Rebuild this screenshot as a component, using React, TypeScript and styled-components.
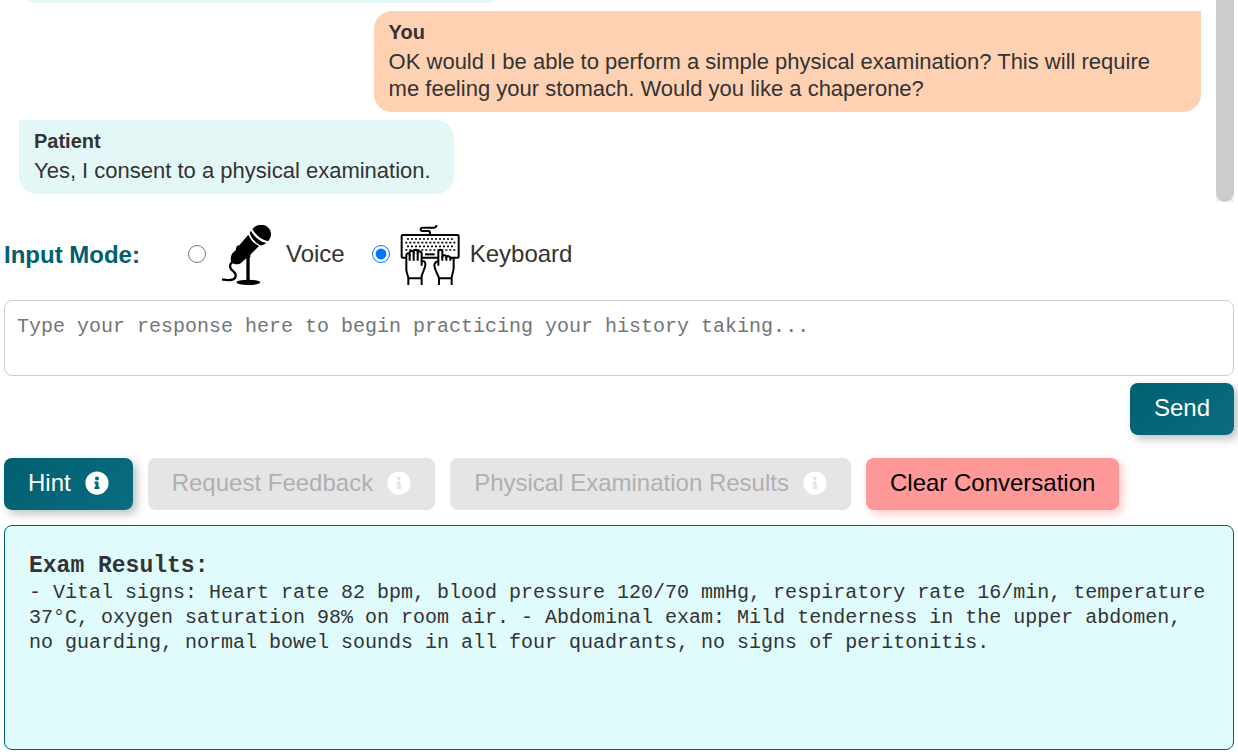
import React from "react";
import styled, { createGlobalStyle, css } from "styled-components";
import { FaInfoCircle } from "react-icons/fa";

const sans = '"Liberation Sans", Arial, sans-serif';
const mono = '"Liberation Mono", "Courier New", monospace';

const GlobalStyle = createGlobalStyle`
  *, *::before, *::after { box-sizing: border-box; }
  body {
    margin: 0;
    background: #fff;
    color: #333;
    font-family: ${sans};
    overflow-x: hidden;
  }
`;

const Page = styled.main`
  display: flex;
  flex-direction: column;
  padding: 0 4px 5px;
`;

const ChatPanel = styled.section`
  display: flex;
  height: 202px;
  overflow: hidden;
`;

const ChatLog = styled.div`
  flex: 1;
  min-width: 0;
  display: flex;
  flex-direction: column;
  justify-content: flex-end;
  gap: 8px;
  padding: 0 15px 8px;
`;

const Bubble = styled.article<{ $own?: boolean }>`
  flex: none;
  max-width: 70%;
  padding: 10px 23px 10px 15px;
  font-size: 22px;
  line-height: 27px;
  ${(p) =>
    p.$own
      ? css`
          align-self: flex-end;
          border-radius: 18px 0 18px 18px;
          background: #ffd1b3;
        `
      : css`
          align-self: flex-start;
          border-radius: 0 18px 18px 18px;
          background: #e4f7f7;
        `}
`;

const EarlierBubble = styled(Bubble)`
  width: 41%;
  min-height: 74px;
`;

const Sender = styled.strong`
  display: block;
  margin-bottom: 5px;
  font-size: 20px;
  line-height: 22px;
`;

const ScrollTrack = styled.div`
  flex: none;
  width: 18px;
  background: #f1f1f1;
`;

const ScrollThumb = styled.div`
  height: 100%;
  border-radius: 0 0 9px 9px;
  background: #ccc;
`;

const ModeRow = styled.fieldset`
  display: flex;
  align-items: center;
  margin: 23px 0 15px;
  padding: 0;
  border: 0;
  height: 60px;
`;

const ModeTitle = styled.span`
  width: 184px;
  color: #006070;
  font-size: 24px;
  font-weight: bold;
`;

const ModeOption = styled.label`
  display: flex;
  align-items: center;
  margin-right: 27px;
  font-size: 24px;
  line-height: 28px;

  svg {
    flex: none;
    margin: 0 10px;
  }
`;

const OptionText = styled.span`
  padding-bottom: 2px;
`;

const Radio = styled.input`
  width: 18px;
  height: 18px;
  margin: 0 0 2px;
`;

const Answer = styled.textarea`
  display: block;
  width: 100%;
  height: 76px;
  padding: 13px 12px;
  border: 1px solid #ccc;
  border-radius: 8px;
  background: #fff;
  color: #333;
  font-family: ${mono};
  font-size: 20px;
  line-height: 26px;
  resize: none;

  &::placeholder {
    color: #757575;
    opacity: 1;
  }
`;

const SendRow = styled.div`
  display: flex;
  justify-content: flex-end;
  margin-top: 7px;
`;

const ActionRow = styled.div`
  display: flex;
  flex-wrap: wrap;
  gap: 15px;
  margin: 23px 0 15px;
`;

const Button = styled.button<{ $danger?: boolean }>`
  display: flex;
  align-items: center;
  gap: 14px;
  height: 52px;
  padding: 0 24px 2px;
  border: 0;
  border-radius: 8px;
  background: linear-gradient(135deg, #006070, #0a6c82);
  box-shadow: 4px 4px 10px rgba(0, 0, 0, 0.25);
  color: #fff;
  font-family: ${sans};
  font-size: 24px;
  line-height: 28px;

  ${(p) =>
    p.$danger &&
    css`
      background: #ff9999;
      box-shadow: 4px 4px 10px rgba(255, 120, 120, 0.4);
      color: #000;
    `}

  &:disabled {
    background: #e5e5e5;
    box-shadow: none;
    color: #b0b0b0;
  }

  svg {
    flex: none;
    color: #fff;
  }
`;

const Results = styled.section`
  min-height: 225px;
  padding: 24px;
  border: 1px solid #006070;
  border-radius: 8px;
  background: #e0fbfc;
  font-family: ${mono};
  font-size: 20px;
  line-height: 25px;
`;

const ResultsTitle = styled.h2`
  margin: 0;
  padding-top: 2px;
  font-size: 23px;
  line-height: 28px;
`;

const ResultsText = styled.p`
  margin: 0;
`;

function MicrophoneIcon() {
  return (
    <svg width="60" height="60" viewBox="18 30 180 180" aria-hidden="true">
      <path d="M131 38C141 28 158 26 170 34C183 43 187 59 179 72L174 79C156 75 139 63 127 43Z" />
      <path d="M123 47C133 67 150 80 169 84C163 89 157 91 151 91C137 84 126 73 119 55C120 52 121 50 123 47Z" />
      <path d="M115 59C121 74 133 87 147 93L121 119L121 126L116 131L109 130L92 145C86 150 73 148 66 143C61 138 61 126 66 116L78 104C77 96 82 91 88 91Z" />
      <path d="M109 120H119V197H109Z" />
      <ellipse cx="115" cy="202" rx="36" ry="8" />
      <path
        d="M68 140C56 150 59 162 70 169C82 178 79 194 61 195C51 196 45 193 36 194"
        fill="none"
        stroke="#000"
        strokeWidth="7"
      />
    </svg>
  );
}

const keyRows = [
  { y: 72, from: 141, to: 280 },
  { y: 83, from: 136, to: 286 },
  { y: 94, from: 141, to: 280 },
  { y: 105, from: 136, to: 286 },
];

function KeyboardIcon() {
  return (
    <svg
      width="60"
      height="60"
      viewBox="120 30 180 180"
      fill="none"
      stroke="#000"
      strokeWidth="6"
      strokeLinejoin="round"
      aria-hidden="true"
    >
      <path d="M229 30V34Q228 38 222 38H187Q182 38 182 43Q182 48 187 48H205Q210 48 210 53V60" />
      <rect x="125" y="60" width="171" height="68" rx="3" />
      {keyRows.map((r) => (
        <path key={r.y} d={`M${r.from} ${r.y}H${r.to}`} strokeWidth="5" strokeDasharray="6 6" />
      ))}
      <path d="M195 118H224" />
      <path
        fill="#fff"
        d="M145 210V190C145 182 139 175 139 163V121Q140 115 144 115Q149 115 149 121V113Q150 107 155 107Q160 107 161 113V109Q162 104 168 104Q173 105 173 111V115Q174 109 179 109Q185 110 185 116V139Q189 137 193 140Q197 144 196 150C195 161 188 171 185 183V210"
      />
      <path d="M149 119V137M161 112V137M173 113V137M185 137V152M145 190H185" />
      <path
        fill="#fff"
        d="M237 210V190C235 180 224 166 223 151Q224 140 235 139V111Q236 104 241 104Q247 105 247 111V125Q248 120 254 121Q259 122 259 127Q262 122 267 124Q271 126 271 130Q277 126 281 132V158C281 170 275 179 275 190V210"
      />
      <path d="M235 139V152M247 124V137M259 126V137M271 130V137M237 190H275" />
    </svg>
  );
}

export default function App() {
  return (
    <>
      <GlobalStyle />
      <Page>
        <ChatPanel aria-label="Conversation">
          <ChatLog>
            <EarlierBubble />
            <Bubble $own>
              <Sender>You</Sender>
              OK would I be able to perform a simple physical examination? This will require me
              feeling your stomach. Would you like a chaperone?
            </Bubble>
            <Bubble>
              <Sender>Patient</Sender>
              Yes, I consent to a physical examination.
            </Bubble>
          </ChatLog>
          <ScrollTrack>
            <ScrollThumb />
          </ScrollTrack>
        </ChatPanel>

        <ModeRow aria-labelledby="mode-title">
          <ModeTitle id="mode-title">Input Mode:</ModeTitle>
          <ModeOption>
            <Radio type="radio" name="mode" value="voice" />
            <MicrophoneIcon />
            <OptionText>Voice</OptionText>
          </ModeOption>
          <ModeOption>
            <Radio type="radio" name="mode" value="keyboard" defaultChecked />
            <KeyboardIcon />
            <OptionText>Keyboard</OptionText>
          </ModeOption>
        </ModeRow>

        <Answer
          aria-label="Your response"
          placeholder="Type your response here to begin practicing your history taking..."
        />
        <SendRow>
          <Button type="button">Send</Button>
        </SendRow>

        <ActionRow>
          <Button type="button">
            Hint
            <FaInfoCircle size={24} />
          </Button>
          <Button type="button" disabled>
            Request Feedback
            <FaInfoCircle size={24} />
          </Button>
          <Button type="button" disabled>
            Physical Examination Results
            <FaInfoCircle size={24} />
          </Button>
          <Button type="button" $danger>
            Clear Conversation
          </Button>
        </ActionRow>

        <Results>
          <ResultsTitle>Exam Results:</ResultsTitle>
          <ResultsText>
            - Vital signs: Heart rate 82 bpm, blood pressure 120/70 mmHg, respiratory rate 16/min,
            temperature 37°C, oxygen saturation 98% on room air. - Abdominal exam: Mild tenderness
            in the upper abdomen, no guarding, normal bowel sounds in all four quadrants, no signs
            of peritonitis.
          </ResultsText>
        </Results>
      </Page>
    </>
  );
}
